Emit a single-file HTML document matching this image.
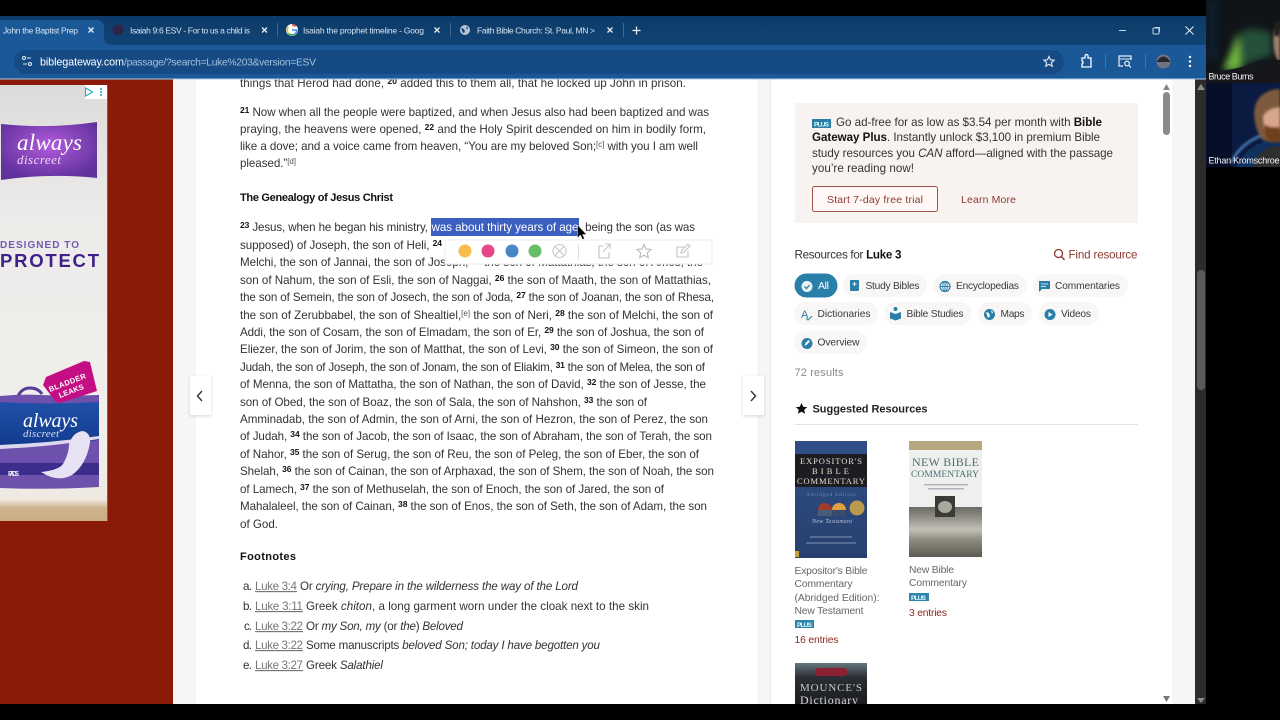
<!DOCTYPE html>
<html><head><meta charset="utf-8"><style>
html,body{margin:0;padding:0;background:#000;width:1280px;height:720px;overflow:hidden}
svg{display:block}
body>svg{filter:blur(.3px)}
text{font-family:"Liberation Sans",sans-serif;white-space:pre}
.b{font-size:11.600px;fill:#333}
.s{font-size:8.500px;font-weight:bold;fill:#111}
.h{font-size:11px;font-weight:bold;fill:#111}
.n{font-size:8px;fill:#555}
.tab{font-size:8.500px;fill:#d8e4f0}
.p{font-size:10.200px;fill:#3a3a3a}
.r{font-size:11.600px;fill:#333}
.red{fill:#8a3a30}
.g{font-size:10.300px;fill:#666}
.ser{font-family:"Liberation Serif",serif}
</style></head><body>
<svg width="1280" height="720" viewBox="0 0 1280 720" xmlns="http://www.w3.org/2000/svg">
<defs>
<linearGradient id="st" x1="0" y1="0" x2="0" y2="1"><stop offset="0" stop-color="#0d3a68"/><stop offset="1" stop-color="#104476"/></linearGradient>
<linearGradient id="ad" x1="0" y1="0" x2="0" y2="1"><stop offset="0" stop-color="#dcdcda"/><stop offset=".3" stop-color="#ecebe9"/><stop offset=".8" stop-color="#f1efec"/><stop offset=".95" stop-color="#efe9e2"/><stop offset=".97" stop-color="#cdb48c"/><stop offset="1" stop-color="#c9ad84"/></linearGradient>
<radialGradient id="lg" cx=".5" cy=".4" r=".6"><stop offset="0" stop-color="#b25cdc"/><stop offset="1" stop-color="#61319c"/></radialGradient>
<linearGradient id="pk" x1="0" y1="0" x2="0" y2="1"><stop offset="0" stop-color="#1f50a8"/><stop offset="1" stop-color="#123a8c"/></linearGradient>
<linearGradient id="ex" x1="0" y1="0" x2="0" y2="1"><stop offset="0" stop-color="#2f4f86"/><stop offset="1" stop-color="#27406e"/></linearGradient>
<linearGradient id="nb" x1="0" y1="0" x2="0" y2="1"><stop offset="0" stop-color="#6a6a64"/><stop offset=".2" stop-color="#8f8d84"/><stop offset=".45" stop-color="#c2c0b6"/><stop offset=".65" stop-color="#8f8c80"/><stop offset="1" stop-color="#5e5a52"/></linearGradient>
<linearGradient id="mo" x1="0" y1="0" x2="0" y2="1"><stop offset="0" stop-color="#66767e"/><stop offset=".35" stop-color="#2a2e34"/><stop offset="1" stop-color="#1a1c20"/></linearGradient>
<linearGradient id="au" x1="0" y1="1" x2="0" y2="0"><stop offset="0" stop-color="#8acb3a"/><stop offset=".5" stop-color="#3f8a4c"/><stop offset="1" stop-color="#1a3a38"/></linearGradient>
<filter id="bl" x="-50%" y="-50%" width="200%" height="200%"><feGaussianBlur stdDeviation="4"/></filter>
<filter id="bs" x="-10%" y="-10%" width="120%" height="120%"><feGaussianBlur stdDeviation="1.200"/></filter>
<filter id="sh" x="-30%" y="-10%" width="160%" height="120%"><feDropShadow dx="0" dy="1" stdDeviation="1.500" flood-color="#000" flood-opacity=".16"/></filter>
</defs>

<rect width="1280" height="720" fill="#000"/>

<!-- Page backgrounds -->
<rect x="0" y="79" width="1206" height="625" fill="#f8f6f5"/>
<rect x="0" y="79" width="173" height="625" fill="#8b1a08"/>
<rect x="196" y="79" width="562" height="625" fill="#fff"/>
<rect x="758" y="79" width="1" height="625" fill="#ececec"/>
<rect x="770" y="79" width="402" height="625" fill="#fff"/>
<rect x="770" y="79" width="1" height="625" fill="#e8e8e8"/>
<rect x="1172" y="79" width="23" height="625" fill="#f8f6f5"/>
<rect x="1195" y="79" width="11" height="625" fill="#2c2c2c"/>
<path d="M1197 90l4-6 4 6z" fill="#8a8a8a"/><path d="M1197 698l4 5 4-5z" fill="#8a8a8a"/>
<rect x="1197" y="270" width="8" height="120" rx="4" fill="#5a5a5a"/>

<!-- Inner scrollbar -->
<path d="M1163 90l3.500-6 3.500 6z" fill="#888"/><path d="M1163 696l3.500 6 3.500-6z" fill="#777"/>
<rect x="1163" y="92" width="7" height="43" rx="3.500" fill="#8a8a8a"/>

<!-- Ad -->
<rect x="0" y="85" width="107" height="436" fill="url(#ad)"/>
<rect x="85" y="85" width="22" height="14" fill="#fff"/>
<path d="M85.500 88l7 4-7 4z" fill="none" stroke="#19b2c2" stroke-width="1.100"/>
<circle cx="101" cy="89" r="1" fill="#19a2b2"/><circle cx="101" cy="92" r="1" fill="#19a2b2"/><circle cx="101" cy="95" r="1" fill="#19a2b2"/>
<path d="M1 124q48 5 96-2v56q-48-5-96 2z" fill="url(#lg)"/>
<text x="17" y="150" font-size="23" fill="#fff" font-style="italic" class="ser" textLength="65">always</text>
<text x="17" y="164" font-size="13" fill="#ead8f6" font-style="italic" class="ser" textLength="44">discreet</text>
<text x="0" y="248" font-size="10" font-weight="bold" fill="#7558b8" textLength="79">DESIGNED TO</text>
<text x="0" y="267" font-size="18.500" font-weight="bold" fill="#3f1f88" textLength="99">PROTECT</text>
<!-- Pack -->
<path d="M18 396q4-8 12-8 8 0 12 6" fill="none" stroke="#5a3a9a" stroke-width="3"/>
<path d="M0 396q20-2 40-1 30 1 59 0v92q-50 3-99 1z" fill="#6e51ac"/>
<path d="M0 402q50 3 99 0v38q-50 6-99 7z" fill="url(#pk)"/>
<path d="M0 445q50-2 99-9v3q-50 8-99 10z" fill="#ddd8ee"/>
<rect x="0" y="463" width="99" height="12" fill="#3a2d8c"/>
<path d="M46 377L84 361 90 362 97 391 60 403 56 402 43 385z" fill="#c40f84"/>
<text transform="translate(50 392) rotate(-21)" font-size="7.500" font-weight="bold" fill="#fff" textLength="39">BLADDER</text>
<text transform="translate(60 398) rotate(-21)" font-size="7.500" font-weight="bold" fill="#fff" textLength="26">LEAKS</text>
<text x="23" y="427" font-size="20" fill="#fff" font-style="italic" class="ser" textLength="55">always</text>
<text x="23" y="437" font-size="11" fill="#d8dff0" font-style="italic" class="ser" textLength="36">discreet</text>
<path d="M41 472q18-2 22-8 6-10 6-20 4-12 14-13 8 2 7 12-4 22-18 32-14 8-31-3z" fill="#e8e2f5"/>
<text x="8" y="476" font-size="7" font-weight="bold" fill="#e8e8f4" textLength="11">PADS</text>
<rect x="107" y="85" width="1" height="436" fill="#c86a58" opacity=".6"/>

<!-- Pager buttons -->
<rect x="190" y="376" width="21" height="39" fill="#fff" filter="url(#sh)"/>
<path d="M202 391l-4.500 5 4.500 5" fill="none" stroke="#333" stroke-width="1.400"/>
<rect x="743" y="376" width="21" height="39" fill="#fff" filter="url(#sh)"/>
<path d="M751 391l4.500 5-4.500 5" fill="none" stroke="#333" stroke-width="1.400"/>

<!-- Passage -->
<g class="passage">
<text class="b" x="240" y="87" textLength="446">things that Herod had done, <tspan class="s" dy="-3">20</tspan><tspan dy="3"> added this to them all, that he locked up John in prison.</tspan></text>
<text class="b" x="240" y="116" textLength="469"><tspan class="s" dy="-3">21</tspan><tspan dy="3"> Now when all the people were baptized, and when Jesus also had been baptized and was</tspan></text>
<text class="b" x="240" y="133" textLength="466">praying, the heavens were opened, <tspan class="s" dy="-3">22</tspan><tspan dy="3"> and the Holy Spirit descended on him in bodily form,</tspan></text>
<text class="b" x="240" y="150" textLength="458">like a dove; and a voice came from heaven, “You are my beloved Son;<tspan class="n" dy="-3">[c]</tspan><tspan dy="3"> with you I am well</tspan></text>
<text class="b" x="240" y="167" textLength="56">pleased.”<tspan class="n" dy="-3">[d]</tspan></text>
<text class="h" x="240" y="201" textLength="153">The Genealogy of Jesus Christ</text>

<rect x="431" y="218" width="148" height="18" fill="#3b5fc0"/>
<text class="b" x="240" y="231" textLength="188"><tspan class="s" dy="-3">23</tspan><tspan dy="3"> Jesus, when he began his ministry,</tspan></text>
<text class="b" x="431.500" y="231" textLength="147" style="fill:#fff">was about thirty years of age</text>
<text class="b" x="579" y="231" textLength="116">, being the son (as was</text>
<text class="b" x="240" y="249" textLength="202">supposed) of Joseph, the son of Heli, <tspan class="s" dy="-3">24</tspan></text>
<text class="b" x="240" y="266" textLength="463">Melchi, the son of Jannai, the son of Joseph, <tspan class="s" dy="-3">25</tspan><tspan dy="3"> the son of Mattathias, the son of Amos, the</tspan></text>
<text class="b" x="240" y="284" textLength="471">son of Nahum, the son of Esli, the son of Naggai, <tspan class="s" dy="-3">26</tspan><tspan dy="3"> the son of Maath, the son of Mattathias,</tspan></text>
<text class="b" x="240" y="301" textLength="474">the son of Semein, the son of Josech, the son of Joda, <tspan class="s" dy="-3">27</tspan><tspan dy="3"> the son of Joanan, the son of Rhesa,</tspan></text>
<text class="b" x="240" y="319" textLength="473">the son of Zerubbabel, the son of Shealtiel,<tspan class="n" dy="-3">[e]</tspan><tspan dy="3"> the son of Neri, </tspan><tspan class="s" dy="-3">28</tspan><tspan dy="3"> the son of Melchi, the son of</tspan></text>
<text class="b" x="240" y="336" textLength="464">Addi, the son of Cosam, the son of Elmadam, the son of Er, <tspan class="s" dy="-3">29</tspan><tspan dy="3"> the son of Joshua, the son of</tspan></text>
<text class="b" x="240" y="353" textLength="473">Eliezer, the son of Jorim, the son of Matthat, the son of Levi, <tspan class="s" dy="-3">30</tspan><tspan dy="3"> the son of Simeon, the son of</tspan></text>
<text class="b" x="240" y="371" textLength="465">Judah, the son of Joseph, the son of Jonam, the son of Eliakim, <tspan class="s" dy="-3">31</tspan><tspan dy="3"> the son of Melea, the son of</tspan></text>
<text class="b" x="240" y="388" textLength="466">of Menna, the son of Mattatha, the son of Nathan, the son of David, <tspan class="s" dy="-3">32</tspan><tspan dy="3"> the son of Jesse, the</tspan></text>
<text class="b" x="240" y="406" textLength="407">son of Obed, the son of Boaz, the son of Sala, the son of Nahshon, <tspan class="s" dy="-3">33</tspan><tspan dy="3"> the son of</tspan></text>
<text class="b" x="240" y="423" textLength="468">Amminadab, the son of Admin, the son of Arni, the son of Hezron, the son of Perez, the son</text>
<text class="b" x="240" y="440" textLength="472">of Judah, <tspan class="s" dy="-3">34</tspan><tspan dy="3"> the son of Jacob, the son of Isaac, the son of Abraham, the son of Terah, the son</tspan></text>
<text class="b" x="240" y="458" textLength="459">of Nahor, <tspan class="s" dy="-3">35</tspan><tspan dy="3"> the son of Serug, the son of Reu, the son of Peleg, the son of Eber, the son of</tspan></text>
<text class="b" x="240" y="475" textLength="474">Shelah, <tspan class="s" dy="-3">36</tspan><tspan dy="3"> the son of Cainan, the son of Arphaxad, the son of Shem, the son of Noah, the son</tspan></text>
<text class="b" x="240" y="493" textLength="424">of Lamech, <tspan class="s" dy="-3">37</tspan><tspan dy="3"> the son of Methuselah, the son of Enoch, the son of Jared, the son of</tspan></text>
<text class="b" x="240" y="510" textLength="467">Mahalaleel, the son of Cainan, <tspan class="s" dy="-3">38</tspan><tspan dy="3"> the son of Enos, the son of Seth, the son of Adam, the son</tspan></text>
<text class="b" x="240" y="528" textLength="38">of God.</text>

<text class="h" x="240" y="560" textLength="56">Footnotes</text>

<text class="b" x="243" y="590" textLength="9">a.</text>
<text class="b" x="255" y="590" textLength="42" style="fill:#777" text-decoration="underline">Luke 3:4</text>
<text class="b" x="300" y="590" textLength="278">Or <tspan font-style="italic">crying, Prepare in the wilderness the way of the Lord</tspan></text>
<text class="b" x="243" y="610" textLength="9">b.</text>
<text class="b" x="255" y="610" textLength="48" style="fill:#777" text-decoration="underline">Luke 3:11</text>
<text class="b" x="306" y="610" textLength="343">Greek <tspan font-style="italic">chiton</tspan>, a long garment worn under the cloak next to the skin</text>
<text class="b" x="244" y="630" textLength="8">c.</text>
<text class="b" x="255" y="630" textLength="48" style="fill:#777" text-decoration="underline">Luke 3:22</text>
<text class="b" x="306" y="630" textLength="157">Or <tspan font-style="italic">my Son, my</tspan> (or <tspan font-style="italic">the</tspan>) <tspan font-style="italic">Beloved</tspan></text>
<text class="b" x="243" y="649" textLength="9">d.</text>
<text class="b" x="255" y="649" textLength="48" style="fill:#777" text-decoration="underline">Luke 3:22</text>
<text class="b" x="306" y="649" textLength="294">Some manuscripts <tspan font-style="italic">beloved Son; today I have begotten you</tspan></text>
<text class="b" x="243" y="669" textLength="9">e.</text>
<text class="b" x="255" y="669" textLength="48" style="fill:#777" text-decoration="underline">Luke 3:27</text>
<text class="b" x="306" y="669" textLength="77">Greek <tspan font-style="italic">Salathiel</tspan></text>
</g>

<!-- Highlight popup -->
<rect x="445" y="240" width="267" height="24" fill="#fff" stroke="#eeeeee"/>
<circle cx="465" cy="251" r="6.500" fill="#f6bd4c"/>
<circle cx="488" cy="251" r="6.500" fill="#e4488a"/>
<circle cx="512" cy="251" r="6.500" fill="#4a86c6"/>
<circle cx="535" cy="251" r="6.500" fill="#66bf66"/>
<circle cx="559.500" cy="251" r="6.500" fill="none" stroke="#c8c8c8" stroke-width="1.100"/>
<path d="M555 246.500l9 9M564 246.500l-9 9" stroke="#c8c8c8" stroke-width="1.100"/>
<rect x="578" y="244" width="1" height="16" fill="#ddd"/>
<path d="M604 246h-5v12h10v-6M603 252l7-8M605 244h5v5" fill="none" stroke="#c4c4c4" stroke-width="1.100"/>
<path d="M644 244.500l2 4.600 5 .4-3.800 3.300 1.200 5-4.400-2.700-4.400 2.700 1.200-5-3.800-3.300 5-.4z" fill="none" stroke="#bcbcbc" stroke-width="1.100"/>
<path d="M684 247h-7v10h11v-6M681 253l1-3 6-6 2 2-6 6z" fill="none" stroke="#c4c4c4" stroke-width="1.100"/>

<!-- Cursor -->
<path d="M577.500 225v13l3-3 2 4.500 2-1-2-4h4z" fill="#000" stroke="#fff" stroke-width=".4"/>

<!-- Promo -->
<rect x="795" y="103" width="343" height="120" fill="#f8f3f1"/>
<rect x="812" y="119" width="19" height="9" fill="#2c7ea6"/>
<text x="814" y="126.500" font-size="6.500" font-weight="bold" fill="#dff" textLength="15">PLUS</text>
<text class="r" x="836" y="126" textLength="266">Go ad-free for as low as $3.54 per month with <tspan font-weight="bold" fill="#111">Bible</tspan></text>
<text class="r" x="812" y="141" textLength="288"><tspan font-weight="bold" fill="#111">Gateway Plus</tspan>. Instantly unlock $3,100 in premium Bible</text>
<text class="r" x="812" y="157" textLength="301">study resources you <tspan font-style="italic">CAN</tspan> afford—aligned with the passage</text>
<text class="r" x="812" y="172" textLength="102">you’re reading now!</text>
<rect x="812.500" y="186.500" width="125" height="25" rx="2" fill="#fff8f6" stroke="#a0544a"/>
<text x="827" y="203" font-size="10.500" class="red" textLength="96">Start 7-day free trial</text>
<text x="961" y="203" font-size="10.500" class="red" textLength="55">Learn More</text>

<!-- Resources -->
<text class="r" x="794.500" y="258.500" textLength="107">Resources for <tspan font-weight="bold" fill="#111">Luke 3</tspan></text>
<circle cx="1058.500" cy="253.500" r="4" fill="none" stroke="#8a3a30" stroke-width="1.300"/>
<path d="M1061.500 256.500l3 3.500" stroke="#8a3a30" stroke-width="1.400"/>
<text x="1068.500" y="258.500" font-size="11.600" class="red" textLength="69">Find resource</text>

<g fill="#f9f7f6">
<rect x="843" y="274" width="84" height="23" rx="11.500"/>
<rect x="933" y="274" width="94" height="23" rx="11.500"/>
<rect x="1033" y="274" width="95" height="23" rx="11.500"/>
<rect x="794" y="302" width="84" height="23" rx="11.500"/>
<rect x="884" y="302" width="88" height="23" rx="11.500"/>
<rect x="978" y="302" width="54" height="23" rx="11.500"/>
<rect x="1039" y="302" width="60" height="23" rx="11.500"/>
<rect x="794" y="331" width="73" height="23" rx="11.500"/>
</g>
<rect x="794.500" y="273.500" width="43" height="24" rx="12" fill="#2a7fa8"/>
<circle cx="807" cy="286.500" r="5.500" fill="#e8f2f7"/>
<path d="M804.500 286.500l2 2 3-3.500" fill="none" stroke="#2a7fa8" stroke-width="1.300"/>
<text x="818" y="289" font-size="10.500" fill="#fff" textLength="11">All</text>

<!-- Study Bibles -->
<rect x="850" y="280" width="9" height="11" rx="1" fill="#2a7fa8"/><path d="M854.500 282v4M852.500 284h4" stroke="#fff" stroke-width="1"/>
<text class="p" x="865.500" y="289" textLength="54">Study Bibles</text>
<!-- Encyclopedias -->
<circle cx="945" cy="286.500" r="5" fill="none" stroke="#2a7fa8" stroke-width="1.200"/><path d="M940 286.500h10M945 281.500v10" stroke="#2a7fa8" stroke-width="1"/><ellipse cx="945" cy="286.500" rx="2.300" ry="5" fill="none" stroke="#2a7fa8" stroke-width=".9"/>
<text class="p" x="956" y="289" textLength="63">Encyclopedias</text>
<!-- Commentaries -->
<path d="M1039 281h11v8h-8l-3 3z" fill="#2a7fa8"/><path d="M1041 284h7M1041 286.500h5" stroke="#fff" stroke-width=".8"/>
<text class="p" x="1055" y="289" textLength="65">Commentaries</text>
<!-- Dictionaries -->
<text x="801" y="318" font-size="11" fill="#2a7fa8" textLength="7">A</text><path d="M806 318l2 2 4-4" fill="none" stroke="#2a7fa8" stroke-width="1"/>
<text class="p" x="817.500" y="317" textLength="53">Dictionaries</text>
<!-- Bible Studies -->
<circle cx="895.500" cy="309" r="2" fill="#2a7fa8"/><path d="M890 312l5.500 2 5.500-2v6.500l-5.500 2-5.500-2z" fill="#2a7fa8"/>
<text class="p" x="906.500" y="317" textLength="57">Bible Studies</text>
<!-- Maps -->
<circle cx="989.500" cy="314.500" r="5.500" fill="#2a7fa8"/><path d="M986 312l3 1 1 3-2 2-1-3zM991 310l2 2-1 2z" fill="#fff"/>
<text class="p" x="1000.500" y="317" textLength="24">Maps</text>
<!-- Videos -->
<circle cx="1050" cy="314.500" r="5.500" fill="#2a7fa8"/><path d="M1048.500 312v5l4-2.500z" fill="#fff"/>
<text class="p" x="1061" y="317" textLength="30">Videos</text>
<!-- Overview -->
<circle cx="807" cy="343.500" r="5.500" fill="#2a7fa8"/><path d="M804.500 346l1-3 3-3 1.500 1.500-3 3z" fill="#fff"/>
<text class="p" x="817.500" y="345.500" textLength="42">Overview</text>

<text x="794.500" y="376" font-size="11" fill="#888" textLength="49">72 results</text>

<path d="M801.500 403l1.700 3.700 4 .4-3 2.700.9 4-3.600-2.100-3.600 2.100.9-4-3-2.700 4-.4z" fill="#111"/>
<text x="812.500" y="412.500" font-size="11" font-weight="bold" fill="#222" textLength="115">Suggested Resources</text>
<rect x="795" y="424" width="343" height="1" fill="#e2e2e2"/>

<!-- Book 1 -->
<rect x="795" y="441" width="72" height="117" fill="url(#ex)"/>
<rect x="795" y="454" width="72" height="33" fill="#1c1c22"/>
<text x="800" y="464" font-size="8.500" fill="#e6e0d2" class="ser" textLength="62">EXPOSITOR'S</text>
<text x="812" y="474" font-size="8.500" fill="#e6e0d2" class="ser" textLength="37">BIBLE</text>
<text x="797" y="484" font-size="8.500" fill="#e6e0d2" class="ser" textLength="68">COMMENTARY</text>
<text x="806" y="496" font-size="5.500" fill="#6f86ac" class="ser" textLength="50">Abridged Edition</text>
<path d="M818 510a7 7 0 0 1 14 0z" fill="#a33a2a"/><rect x="818" y="510" width="14" height="6" fill="#4a5a7a"/>
<path d="M832 510a7 7 0 0 1 14 0z" fill="#e0a040"/><rect x="832" y="510" width="14" height="6" fill="#3a4a6a"/>
<circle cx="857" cy="508" r="7.500" fill="#bb9a50"/>
<text x="812" y="523" font-size="6" font-style="italic" fill="#b8c4d8" class="ser" textLength="40">New Testament</text>
<rect x="810" y="536" width="42" height="2" fill="#6a7ea0" opacity=".7"/>
<rect x="806" y="542" width="50" height="2" fill="#6a7ea0" opacity=".7"/>
<rect x="795" y="551" width="4" height="6" fill="#caa23a"/>

<!-- Book 2 -->
<rect x="909" y="441" width="73" height="116" fill="#eef0ee"/>
<rect x="909" y="507" width="73" height="50" fill="url(#nb)"/>
<rect x="909" y="441" width="73" height="9" fill="#b6a87e"/>
<text x="912" y="466" font-size="12" fill="#4f6e76" class="ser" textLength="67">NEW BIBLE</text>
<text x="911" y="477" font-size="9.500" fill="#4f6e76" class="ser" textLength="68">COMMENTARY</text>
<rect x="924" y="484" width="44" height="1.500" fill="#99a" opacity=".7"/>
<rect x="928" y="488" width="36" height="1.500" fill="#99a" opacity=".7"/>
<rect x="935" y="496" width="20" height="21" fill="#3a3a36"/>
<ellipse cx="945" cy="507" rx="7" ry="6" fill="#aaa9a0"/>

<!-- Book 3 -->
<rect x="795" y="663" width="72" height="41" fill="url(#mo)"/>
<rect x="815" y="668" width="32" height="8" rx="3" fill="#8b2030"/>
<text x="800" y="691" font-size="11" fill="#c8c8c8" class="ser" textLength="62">MOUNCE'S</text>
<text x="800" y="704" font-size="12" fill="#d8d8d8" class="ser" textLength="58">Dictionary</text>

<!-- Book labels -->
<text class="g" x="794.500" y="574" textLength="73">Expositor's Bible</text>
<text class="g" x="794.500" y="587" textLength="58">Commentary</text>
<text class="g" x="794.500" y="601" textLength="85">(Abridged Edition):</text>
<text class="g" x="794.500" y="614" textLength="69">New Testament</text>
<rect x="795" y="620" width="19" height="8" fill="#2c86ae"/><text x="797" y="627" font-size="6.500" font-weight="bold" fill="#e8fbff" textLength="15">PLUS</text>
<text x="794.500" y="643" font-size="10.300" class="red" style="fill:#8a2a20" textLength="44">16 entries</text>

<text class="g" x="909" y="573" textLength="45">New Bible</text>
<text class="g" x="909" y="586" textLength="58">Commentary</text>
<rect x="909" y="593" width="20" height="8" fill="#2c86ae"/><text x="911" y="600" font-size="6.500" font-weight="bold" fill="#e8fbff" textLength="15">PLUS</text>
<text x="909" y="616" font-size="10.300" class="red" style="fill:#8a2a20" textLength="38">3 entries</text>

<!-- Bottom black -->
<rect x="0" y="704" width="1206" height="16" fill="#000"/>

<!-- Chrome -->
<rect x="0" y="16" width="1206" height="29" fill="url(#st)"/>
<path d="M0 20h96q8 0 8 8v9q0 8 8 8H0z" fill="#1a5898"/>
<rect x="0" y="45" width="1206" height="34" fill="#1a5898"/>
<rect x="0" y="78.500" width="1206" height="1" fill="#a8cce8"/>
<rect x="14" y="50" width="1050" height="24" rx="12" fill="#164a85"/>

<text class="tab" x="3" y="33.500" textLength="75">John the Baptist Prep</text>
<path d="M88.500 27.500l5 5M93.500 27.500l-5 5" stroke="#e8eef5" stroke-width="1.300"/>

<circle cx="118" cy="30" r="5.500" fill="#2e2348"/>
<text class="tab" x="130" y="33.500" textLength="120">Isaiah 9:6 ESV - For to us a child is</text>
<path d="M262 27.500l5 5M267 27.500l-5 5" stroke="#e8eef5" stroke-width="1.300"/>
<rect x="277" y="23" width="1" height="14" fill="#3f6a96"/>

<circle cx="292" cy="30" r="6" fill="#fff"/>
<path d="M292 25a5 5 0 0 1 3.500 1.400" fill="none" stroke="#e5453a" stroke-width="1.600"/>
<path d="M288.300 27a5 5 0 0 0 0 6" fill="none" stroke="#f4b400" stroke-width="1.600"/>
<path d="M288.500 33.500a5 5 0 0 0 6.500.5" fill="none" stroke="#34a853" stroke-width="1.600"/>
<path d="M292 30h4.600a4.600 4.600 0 0 1-1.600 4" fill="none" stroke="#4285f4" stroke-width="1.600"/>
<text class="tab" x="303" y="33.500" textLength="121">Isaiah the prophet timeline - Goog</text>
<path d="M434.500 27.500l5 5M439.500 27.500l-5 5" stroke="#e8eef5" stroke-width="1.300"/>
<rect x="450" y="23" width="1" height="14" fill="#3f6a96"/>

<circle cx="465" cy="30" r="5" fill="#b8c6d4"/><path d="M461 28l3 1 1 3-2 1zM466 26l2 2-1 2z" fill="#0f3f70"/>
<text class="tab" x="477" y="33.500" textLength="118">Faith Bible Church: St. Paul, MN &gt;</text>
<path d="M607.500 27.500l5 5M612.500 27.500l-5 5" stroke="#e8eef5" stroke-width="1.300"/>
<rect x="623" y="23" width="1" height="14" fill="#3f6a96"/>
<path d="M636.500 26.500v8M632.500 30.500h8" stroke="#e8eef5" stroke-width="1.300"/>

<path d="M1119 30.500h7" stroke="#c8d8e8" stroke-width="1"/>
<rect x="1153" y="28" width="6" height="6" rx="1" fill="none" stroke="#c8d8e8" stroke-width="1"/>
<path d="M1155 27.500h4.500v4.500" fill="none" stroke="#c8d8e8" stroke-width=".9"/>
<path d="M1185.500 26.500l8 8M1193.500 26.500l-8 8" stroke="#dbe6f0" stroke-width="1.100"/>

<!-- Toolbar icons -->
<circle cx="24" cy="58" r="1.500" fill="none" stroke="#dfe9f3"/><path d="M27 58h4M23 64h4" stroke="#dfe9f3"/><circle cx="30" cy="64" r="1.500" fill="none" stroke="#dfe9f3"/>
<text x="40" y="65.500" font-size="10.800" fill="#fff" textLength="84">biblegateway.com</text>
<text x="124" y="65.500" font-size="10.300" fill="#a4c0dc" textLength="192">/passage/?search=Luke%203&amp;version=ESV</text>
<path d="M1049 56.500l1.500 3.300 3.600.4-2.700 2.400.8 3.600-3.200-1.900-3.200 1.900.8-3.600-2.700-2.400 3.600-.4z" fill="none" stroke="#e4edf5" stroke-width="1.100"/>
<path d="M1082 58h3v-2a1.500 1.500 0 0 1 3 0v2h3v9h-9v-3a1.600 1.600 0 0 0 0-3z" fill="none" stroke="#fff" stroke-width="1.300"/>
<rect x="1105" y="54" width="1" height="14" fill="#3f74ac"/>
<path d="M1123 66h-4v-10h12v4" fill="none" stroke="#e8eef5" stroke-width="1.200"/><path d="M1119 59h12" stroke="#e8eef5" stroke-width="1"/>
<circle cx="1127" cy="63.500" r="2.300" fill="none" stroke="#fff" stroke-width="1.100"/><path d="M1129 65.500l2 2" stroke="#fff" stroke-width="1.100"/>
<rect x="1145" y="54" width="1" height="14" fill="#3f74ac"/>
<circle cx="1163.500" cy="61.500" r="7" fill="#6f7480"/>
<path d="M1156.500 62q7-11 14 0z" fill="#26262c"/>
<circle cx="1190" cy="57" r="1.200" fill="#fff"/><circle cx="1190" cy="61.500" r="1.200" fill="#fff"/><circle cx="1190" cy="66" r="1.200" fill="#fff"/>

<!-- Black top -->
<rect x="0" y="0" width="1206" height="16" fill="#000"/>

<!-- Video tiles -->
<svg x="1206" y="0" width="74" height="83" viewBox="0 0 74 83">
<rect width="74" height="83" fill="#101418"/>
<rect width="12" height="60" fill="#0c2036" opacity=".7" filter="url(#bl)"/>
<path d="M18 70Q28 50 34 32 50 26 66 34V56Q40 62 30 70z" fill="#2f6a4a" opacity=".7" filter="url(#bl)"/>
<path d="M17 70q8-14 14-36 6 14 3 36z" fill="#7fc43c" opacity=".9" filter="url(#bl)"/>
<path d="M68 30q-3 22 6 34V30z" fill="#9c7c6a" filter="url(#bs)"/>
<path d="M0 83V72q35-2 48-10 12-4 26-2v23z" fill="#15171b"/>
<path d="M70 22q-4 6-2 14l6 0V20z" fill="#23201c" filter="url(#bs)"/>
</svg>
<text x="1208.500" y="79.500" font-size="9" fill="#f4f4f4" textLength="45">Bruce Burns</text>

<svg x="1206" y="83" width="74" height="84" viewBox="0 0 74 84">
<rect width="74" height="84" fill="#0a1a40"/>
<rect x="0" width="26" height="84" fill="#060e28"/>
<path d="M25 80q10-22 38-30" fill="none" stroke="#5a9ad8" stroke-width="2" filter="url(#bs)"/>
<path d="M30 84q10-24 44-30v30z" fill="#10305e"/>
<path d="M48 30q1-12 8-18 8-6 18-6v52H58q-9-8-10-28z" fill="#7d5a3c" filter="url(#bs)"/>
<path d="M57 34q2-8 17-10v24H60q-3-6-3-14z" fill="#d8a68c" filter="url(#bs)"/>
<path d="M58 42q8 4 16 2v15H64q-6-6-6-17z" fill="#70401f" filter="url(#bs)"/>
<path d="M48 84q2-14 16-20l10-1v21z" fill="#2e2e30"/>
</svg>
<text x="1208.500" y="163.500" font-size="9" fill="#f4f4f4" textLength="71">Ethan Kromschroe</text>
</svg>
</body></html>
